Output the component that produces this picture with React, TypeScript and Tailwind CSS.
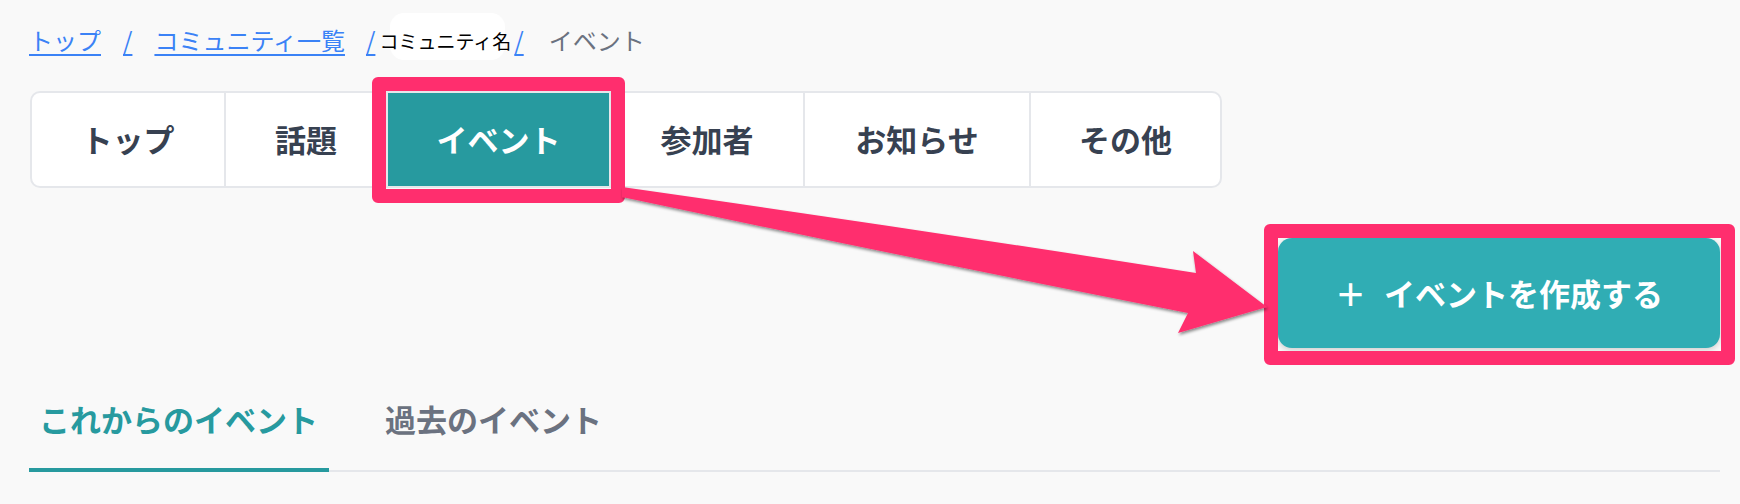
const tabs = [
  { label: 'トップ', w: 'w-[192px]' },
  { label: '話題', w: 'w-[162px] border-l-2' },
  { label: 'イベント', w: 'w-[223px] border-l-2', active: true },
  { label: '参加者', w: 'w-[194px] border-l-2' },
  { label: 'お知らせ', w: 'w-[226px] border-l-2' },
  { label: 'その他', w: 'w-[191px] border-l-2' },
];

function Arrow() {
  return (
    <svg className="absolute left-0 top-0 pointer-events-none" width="1740" height="504" viewBox="0 0 1740 504">
      <defs>
        <filter id="arrowShadow" x="-5%" y="-20%" width="110%" height="140%">
          <feDropShadow dx="1" dy="2" stdDeviation="1.4" floodColor="#000" floodOpacity="0.45" />
        </filter>
      </defs>
      <path
        d="M 622 187 Q 910 228 1196 273 L 1193 251 L 1267 307 L 1178 333 L 1188 313 Q 905 257 622 197 Z"
        fill="#ff2e6e"
        filter="url(#arrowShadow)"
      />
    </svg>
  );
}

export default function App() {
  return (
    <div className="relative w-full h-[504px] overflow-hidden bg-[#f9f9f9] pl-[29px] pr-[20px] font-['Noto_Sans_CJK_JP','Noto_Sans',sans-serif]">
      {/* breadcrumb */}
      <nav className="mt-[16px] h-[48px] flex items-center text-[24px] leading-none">
        <a className="text-[#3b82f6] underline decoration-[1.5px] underline-offset-[4px]">トップ</a>
        <a className="mx-[22px] text-[#3b82f6] underline decoration-[1.5px] underline-offset-[4px]">/</a>
        <a className="text-[#3b82f6] underline decoration-[1.5px] underline-offset-[4px]">コミュニティ一覧</a>
        <a className="ml-[21px] text-[#3b82f6] underline decoration-[1.5px] underline-offset-[4px]">/</a>
        <span className="relative ml-[4px] h-[47px] flex items-center">
          <span className="absolute left-[11px] right-[6px] -top-[4px] bottom-[4px] rounded-[14px] bg-white" />
          <span className="relative text-[19px] text-black">コミュニティ名</span>
        </span>
        <a className="ml-[3px] text-[#3b82f6] underline decoration-[1.5px] underline-offset-[4px]">/</a>
        <span className="ml-[25px] text-[#6b7280]">イベント</span>
      </nav>

      {/* community tabs */}
      <div className="mt-[27px] ml-[1px] w-fit flex h-[97px] rounded-[10px] border-2 border-[#e5e7eb] bg-white overflow-hidden">
        {tabs.map(t => (
          <div
            key={t.label}
            className={`${t.w} border-[#e5e7eb] flex items-center justify-center text-[31px] font-bold ${
              t.active ? 'bg-[#279a9f] text-white' : 'text-[#374151]'
            }`}
          >
            {t.label}
          </div>
        ))}
      </div>

      {/* create button */}
      <div className="mt-[50px] flex justify-end">
        <button className="w-[442px] h-[110px] rounded-[14px] bg-[#30adb4] text-white text-[31px] font-bold flex items-center justify-center shadow-[0_2px_6px_rgba(0,0,0,0.18)]">
          <span className="mr-[18px]">＋</span>
          イベントを作成する
        </button>
      </div>

      {/* event tabs */}
      <div className="mt-[48px] flex border-b-2 border-[#e5e7eb]">
        <div className="-mb-[2px] w-[300px] px-[10px] pb-[26px] border-b-4 border-[#279a9f] text-[31px] leading-[46px] font-bold text-[#279a9f]">
          これからのイベント
        </div>
        <div className="ml-[46px] px-[10px] pb-[26px] text-[31px] leading-[46px] font-bold text-[#6b7280]">
          過去のイベント
        </div>
      </div>

      {/* annotations */}
      <div className="absolute left-[372px] top-[77px] w-[253px] h-[126px] rounded-[6px] border-[14px] border-[#ff2e6e]" />
      <div className="absolute left-[1264px] top-[224px] w-[471px] h-[141px] rounded-[6px] border-[14px] border-[#ff2e6e]" />
      <Arrow />
    </div>
  );
}
